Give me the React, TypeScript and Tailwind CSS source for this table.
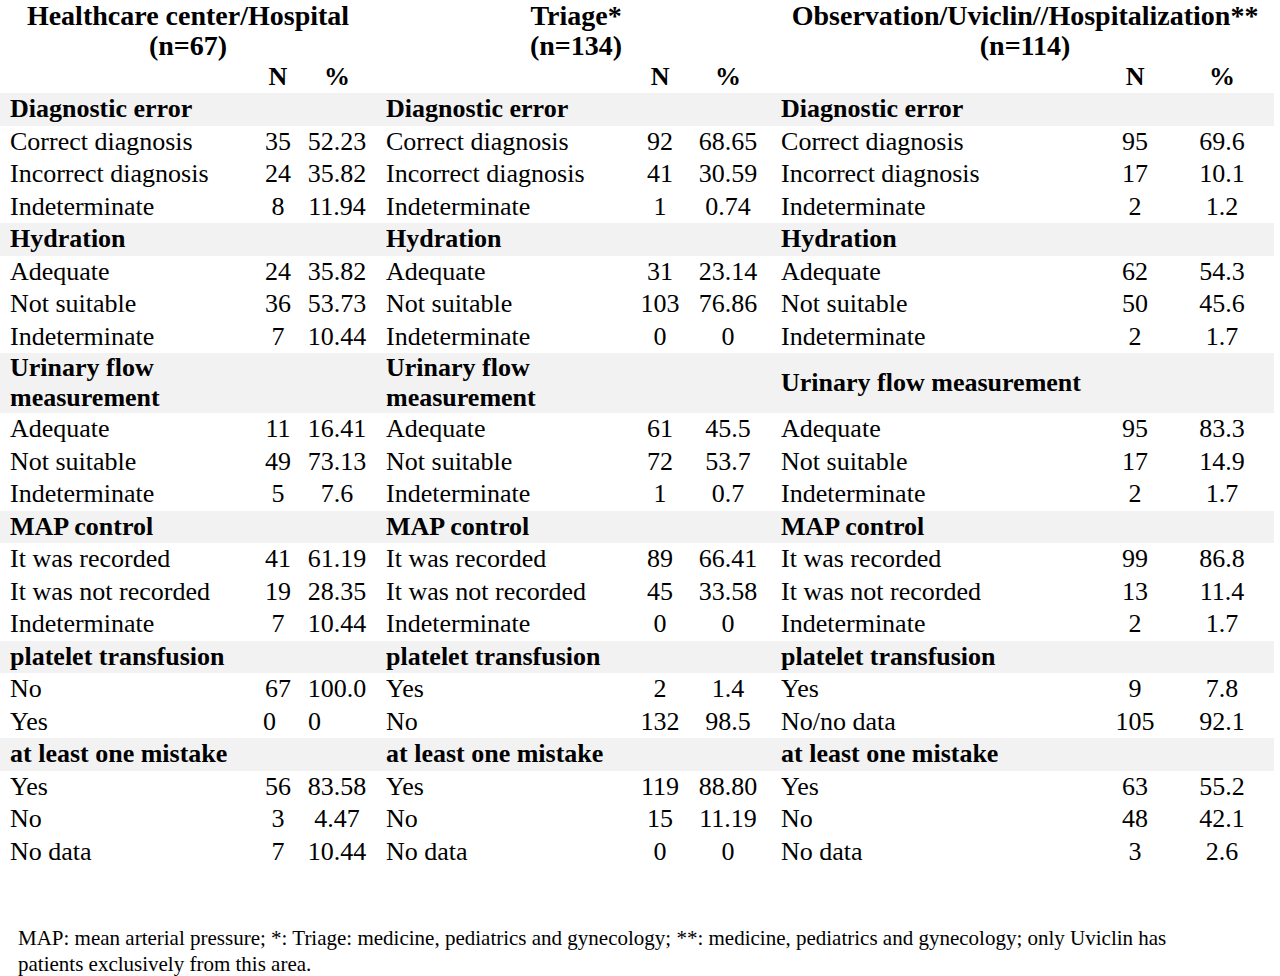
type Cell = string | [string, 'l' | 'c']
type Trio = [string, Cell, Cell]

const titles = [
  ['Healthcare center/Hospital', '(n=67)'],
  ['Triage*', '(n=134)'],
  ['Observation/Uviclin//Hospitalization**', '(n=114)'],
]

const sections: { name: string; rows: Trio[][] }[] = [
  {
    name: 'Diagnostic error',
    rows: [
      [['Correct diagnosis', '35', '52.23'], ['Correct diagnosis', '92', '68.65'], ['Correct diagnosis', '95', '69.6']],
      [['Incorrect diagnosis', '24', '35.82'], ['Incorrect diagnosis', '41', '30.59'], ['Incorrect diagnosis', '17', '10.1']],
      [['Indeterminate', '8', '11.94'], ['Indeterminate', '1', '0.74'], ['Indeterminate', '2', '1.2']],
    ],
  },
  {
    name: 'Hydration',
    rows: [
      [['Adequate', '24', '35.82'], ['Adequate', '31', '23.14'], ['Adequate', '62', '54.3']],
      [['Not suitable', '36', '53.73'], ['Not suitable', '103', '76.86'], ['Not suitable', '50', '45.6']],
      [['Indeterminate', '7', '10.44'], ['Indeterminate', '0', '0'], ['Indeterminate', '2', '1.7']],
    ],
  },
  {
    name: 'Urinary flow measurement',
    rows: [
      [['Adequate', '11', '16.41'], ['Adequate', '61', '45.5'], ['Adequate', '95', '83.3']],
      [['Not suitable', '49', '73.13'], ['Not suitable', '72', '53.7'], ['Not suitable', '17', '14.9']],
      [['Indeterminate', '5', '7.6'], ['Indeterminate', '1', '0.7'], ['Indeterminate', '2', '1.7']],
    ],
  },
  {
    name: 'MAP control',
    rows: [
      [['It was recorded', '41', '61.19'], ['It was recorded', '89', '66.41'], ['It was recorded', '99', '86.8']],
      [['It was not recorded', '19', '28.35'], ['It was not recorded', '45', '33.58'], ['It was not recorded', '13', '11.4']],
      [['Indeterminate', '7', '10.44'], ['Indeterminate', '0', '0'], ['Indeterminate', '2', '1.7']],
    ],
  },
  {
    name: 'platelet transfusion',
    rows: [
      [['No', '67', '100.0'], ['Yes', '2', '1.4'], ['Yes', '9', '7.8']],
      [['Yes', ['0', 'l'], ['0', 'l']], ['No', '132', '98.5'], ['No/no data', '105', '92.1']],
    ],
  },
  {
    name: 'at least one mistake',
    rows: [
      [['Yes', '56', '83.58'], ['Yes', '119', '88.80'], ['Yes', '63', '55.2']],
      [['No', '3', '4.47'], ['No', '15', '11.19'], ['No', '48', '42.1']],
      [['No data', '7', '10.44'], ['No data', '0', '0'], ['No data', '3', '2.6']],
    ],
  },
]

const labelPad = ['pl-[10px]', 'pl-[10px]', 'pl-[5px]']

function Num({ value, pad }: { value: Cell; pad: string }) {
  if (Array.isArray(value)) {
    return <td className={`text-left ${pad}`}>{value[0]}</td>
  }
  return <td className="text-center">{value}</td>
}

export default function App() {
  return (
    <div className="w-[1280px] h-[976px] bg-white text-black overflow-hidden font-['Liberation_Serif',serif]">
      <table className="table-fixed border-collapse w-[1274px] text-[26px] leading-[30px]">
        <colgroup>
          <col className="w-[258px]" />
          <col className="w-[40px]" />
          <col className="w-[78px]" />
          <col className="w-[264px]" />
          <col className="w-[40px]" />
          <col className="w-[96px]" />
          <col className="w-[324px]" />
          <col className="w-[70px]" />
          <col className="w-[104px]" />
        </colgroup>
        <thead>
          <tr className="h-[61px]">
            {titles.map(([t, n]) => (
              <th key={t} colSpan={3} className="text-center font-bold text-[28px] leading-[30px] p-0 align-middle">
                {t}
                <br />
                {n}
              </th>
            ))}
          </tr>
          <tr className="h-[32px] font-bold">
            {titles.map(([t]) => [
              <th key={t + 'l'} />,
              <th key={t + 'n'} className="text-center font-bold">N</th>,
              <th key={t + 'p'} className="text-center font-bold">%</th>,
            ])}
          </tr>
        </thead>
        <tbody>
          {sections.map((s) => [
            <tr key={s.name} className={`bg-[#f2f2f2] ${s.name.startsWith('Urinary') ? 'h-[60px]' : 'h-[32.5px]'}`}>
              {[0, 1, 2].map((p) => [
                <td key={p + 'l'} className={`font-bold align-middle ${labelPad[p]}`}>{s.name}</td>,
                <td key={p + 'n'} />,
                <td key={p + 'p'} />,
              ])}
            </tr>,
            ...s.rows.map((row, ri) => (
              <tr key={s.name + ri} className="h-[32.5px]">
                {row.map(([label, n, pct], p) => [
                  <td key={p + 'l'} className={`whitespace-nowrap ${labelPad[p]}`}>{label}</td>,
                  <Num key={p + 'n'} value={n} pad="pl-[5px]" />,
                  <Num key={p + 'p'} value={pct} pad="pl-[10px]" />,
                ])}
              </tr>
            )),
          ])}
        </tbody>
      </table>
      <p className="mt-[57px] pl-[18px] w-[1200px] text-[21px] leading-[26px]">
        MAP: mean arterial pressure; *: Triage: medicine, pediatrics and gynecology; **: medicine, pediatrics and gynecology; only Uviclin has patients exclusively from this area.
      </p>
    </div>
  )
}
